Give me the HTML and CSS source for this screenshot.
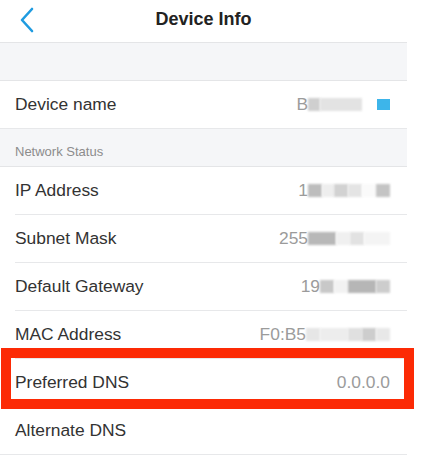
FILE: index.html
```html
<!DOCTYPE html>
<html lang="en">

<head>
  <meta charset="UTF-8">
  <title>Device Info</title>
  <link rel="stylesheet" href="styles.css">
</head>

<body>
  <div class="screen">
    <!-- top bar -->
    <div class="topbar">
      <svg class="back" width="16" height="26" viewBox="0 0 16 26">
        <path d="M13 2 L3 13 L13 24" fill="none" stroke="#1f9be0" stroke-width="2.6" stroke-linecap="round" stroke-linejoin="round"/>
      </svg>
      <div class="title">Device Info</div>
      <div></div>
    </div>

    <div class="band"></div>

    <div class="row full">
      <span class="label">Device name</span>
      <span class="value">B<i class="blk" style="width:12px;background:#cfcfcf"></i><i class="blk" style="width:42px;background:#e3e3e3"></i><i class="square"></i></span>
    </div>

    <div class="band section">Network Status</div>

    <div class="row">
      <span class="label">IP Address</span>
      <span class="value">1<i class="blk" style="width:14px;background:#bdbdbd"></i><i class="blk" style="width:12px;background:#eeeeee"></i><i class="blk" style="width:14px;background:#d2d2d2"></i><i class="blk" style="width:14px;background:#e4e4e4"></i><i class="blk" style="width:14px;background:#fafafa"></i><i class="blk" style="width:14px;background:#c4c4c4"></i></span>
    </div>
    <div class="row">
      <span class="label">Subnet Mask</span>
      <span class="value">255<i class="blk" style="width:28px;background:#b8b8b8"></i><i class="blk" style="width:14px;background:#f0f0f0"></i><i class="blk" style="width:14px;background:#e2e2e2"></i><i class="blk" style="width:26px;background:#f4f4f4"></i></span>
    </div>
    <div class="row">
      <span class="label">Default Gateway</span>
      <span class="value">19<i class="blk" style="width:14px;background:#c8c8c8"></i><i class="blk" style="width:14px;background:#f2f2f2"></i><i class="blk" style="width:28px;background:#b6b6b6"></i><i class="blk" style="width:14px;background:#cdcdcd"></i></span>
    </div>
    <div class="row">
      <span class="label">MAC Address</span>
      <span class="value">F0:B5<i class="blk" style="width:14px;background:#e6e6e6"></i><i class="blk" style="width:28px;background:#ededed"></i><i class="blk" style="width:14px;background:#e0e0e0"></i><i class="blk" style="width:14px;background:#cdcdcd"></i><i class="blk" style="width:14px;background:#e8e8e8"></i></span>
    </div>
    <div class="row marked">
      <span class="label">Preferred DNS</span>
      <span class="value">0.0.0.0</span>
      <div class="highlight"></div>
    </div>
    <div class="row full">
      <span class="label">Alternate DNS</span>
      <span class="value"></span>
    </div>
  </div>
</body>

</html>
```

FILE: styles.css
```css
/* page */
body {
  margin: 0;
  background-color: white;
  font-family: "Liberation Sans", Arial, sans-serif;
}

.screen {
  width: 407px;
}

/* top bar */
.topbar {
  height: 43px;
  display: grid;
  grid-template-columns: 1fr auto 1fr;
  align-items: center;
  border-bottom: 1px solid #e4e5e7;
  box-sizing: border-box;
}

.back {
  margin-left: 19px;
  margin-top: -2px;
}

.title {
  font-size: 18px;
  font-weight: bold;
  color: #222;
  margin-top: -4px;
}

/* grey bands */
.band {
  height: 38px;
  background-color: #f5f6f8;
  border-bottom: 1px solid #e4e5e7;
  box-sizing: border-box;
}

.section {
  display: flex;
  align-items: flex-end;
  padding: 0 0 7px 15px;
  font-size: 13px;
  color: #8c8c8c;
}

/* rows */
.row {
  height: 48px;
  margin-left: 15px;
  padding-right: 17px;
  display: flex;
  align-items: center;
  justify-content: space-between;
  border-bottom: 1px solid #e7e8ea;
  box-sizing: border-box;
  position: relative;
  font-size: 17.4px;
}

.row.full {
  margin-left: 0;
  padding-left: 15px;
}

.label {
  color: #333;
}

.value {
  color: #9b9b9b;
  display: flex;
  align-items: center;
}

.blk {
  display: inline-block;
  height: 13px;
  filter: blur(0.8px);
}

.square {
  display: inline-block;
  width: 13px;
  height: 11px;
  margin-left: 15px;
  background-color: #3db5ea;
}

/* red marker over preferred dns */
.highlight {
  position: absolute;
  top: -11px;
  left: -14px;
  width: 413px;
  height: 61px;
  border: 10px solid #fc2a05;
  box-sizing: border-box;
}
```
